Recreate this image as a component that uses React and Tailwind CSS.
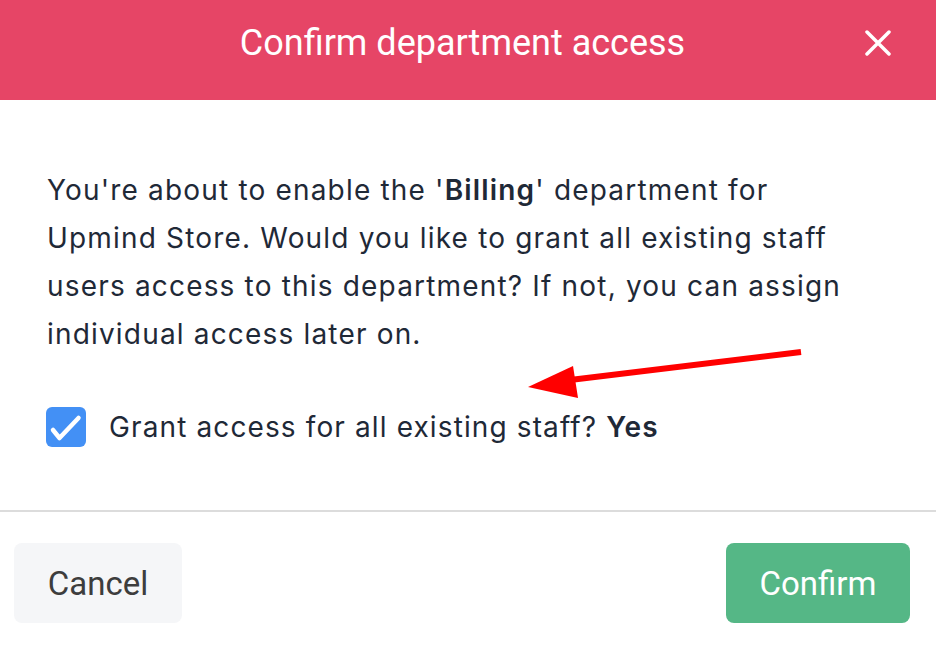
export default function App() {
  return (
    <div className="w-[936px] h-[648px] bg-white relative overflow-hidden" style={{ fontFamily: 'Inter, "Noto Sans", sans-serif' }}>
      <div className="h-[100px] bg-[#e64566] flex justify-center pt-[20px] pr-[11px] relative">
        <span className="text-white text-[36px] leading-[46px]" style={{ fontFamily: 'Roboto, "Liberation Sans", sans-serif' }}>Confirm department access</span>
        <svg className="absolute left-[865px] top-[30px]" width="26" height="26" viewBox="0 0 26 26">
          <path d="M2 2 L24 24 M24 2 L2 24" stroke="white" strokeWidth="3.5" strokeLinecap="round" />
        </svg>
      </div>
      <div className="h-[412px] border-b-2 border-[#dcdcdc] px-[47px] pt-[66px] text-[#1f2937]">
        <p className="text-[28px] leading-[48px] tracking-[0.042em] w-[830px]">
          You're about to enable the '<b className="font-semibold">Billing</b>' department for Upmind Store. Would you like to grant all existing staff users access to this department? If not, you can assign individual access later on.
        </p>
        <div className="flex items-center gap-[23px] mt-[47px] -ml-[1px]">
          <div className="w-[40px] h-[40px] rounded-[6px] bg-[#4390f5]">
            <svg width="40" height="40" viewBox="0 0 40 40">
              <path d="M7 23 L13.5 31 L32.5 11" stroke="white" strokeWidth="4.5" fill="none" strokeLinecap="round" strokeLinejoin="round" />
            </svg>
          </div>
          <span className="text-[28px] tracking-[0.04em] leading-[44px]">Grant access for all existing staff? <b className="font-semibold">Yes</b></span>
        </div>
      </div>
      <div className="flex justify-between px-[14px] pt-[31px]" style={{ fontFamily: 'Roboto, "Liberation Sans", sans-serif' }}>
        <button className="w-[168px] h-[80px] pt-[2px] rounded-[8px] bg-[#f5f6f8] text-[#3d3d3d] text-[33px]">Cancel</button>
        <button className="w-[184px] h-[80px] pt-[2px] mr-[12px] rounded-[8px] bg-[#55b786] text-white text-[33px]">Confirm</button>
      </div>
      <svg className="absolute left-0 top-0 pointer-events-none" width="936" height="648">
        <line x1="801" y1="352" x2="570" y2="380" stroke="#ff0000" strokeWidth="6" />
        <polygon points="528,387 573,366 578,398" fill="#ff0000" />
      </svg>
    </div>
  );
}
